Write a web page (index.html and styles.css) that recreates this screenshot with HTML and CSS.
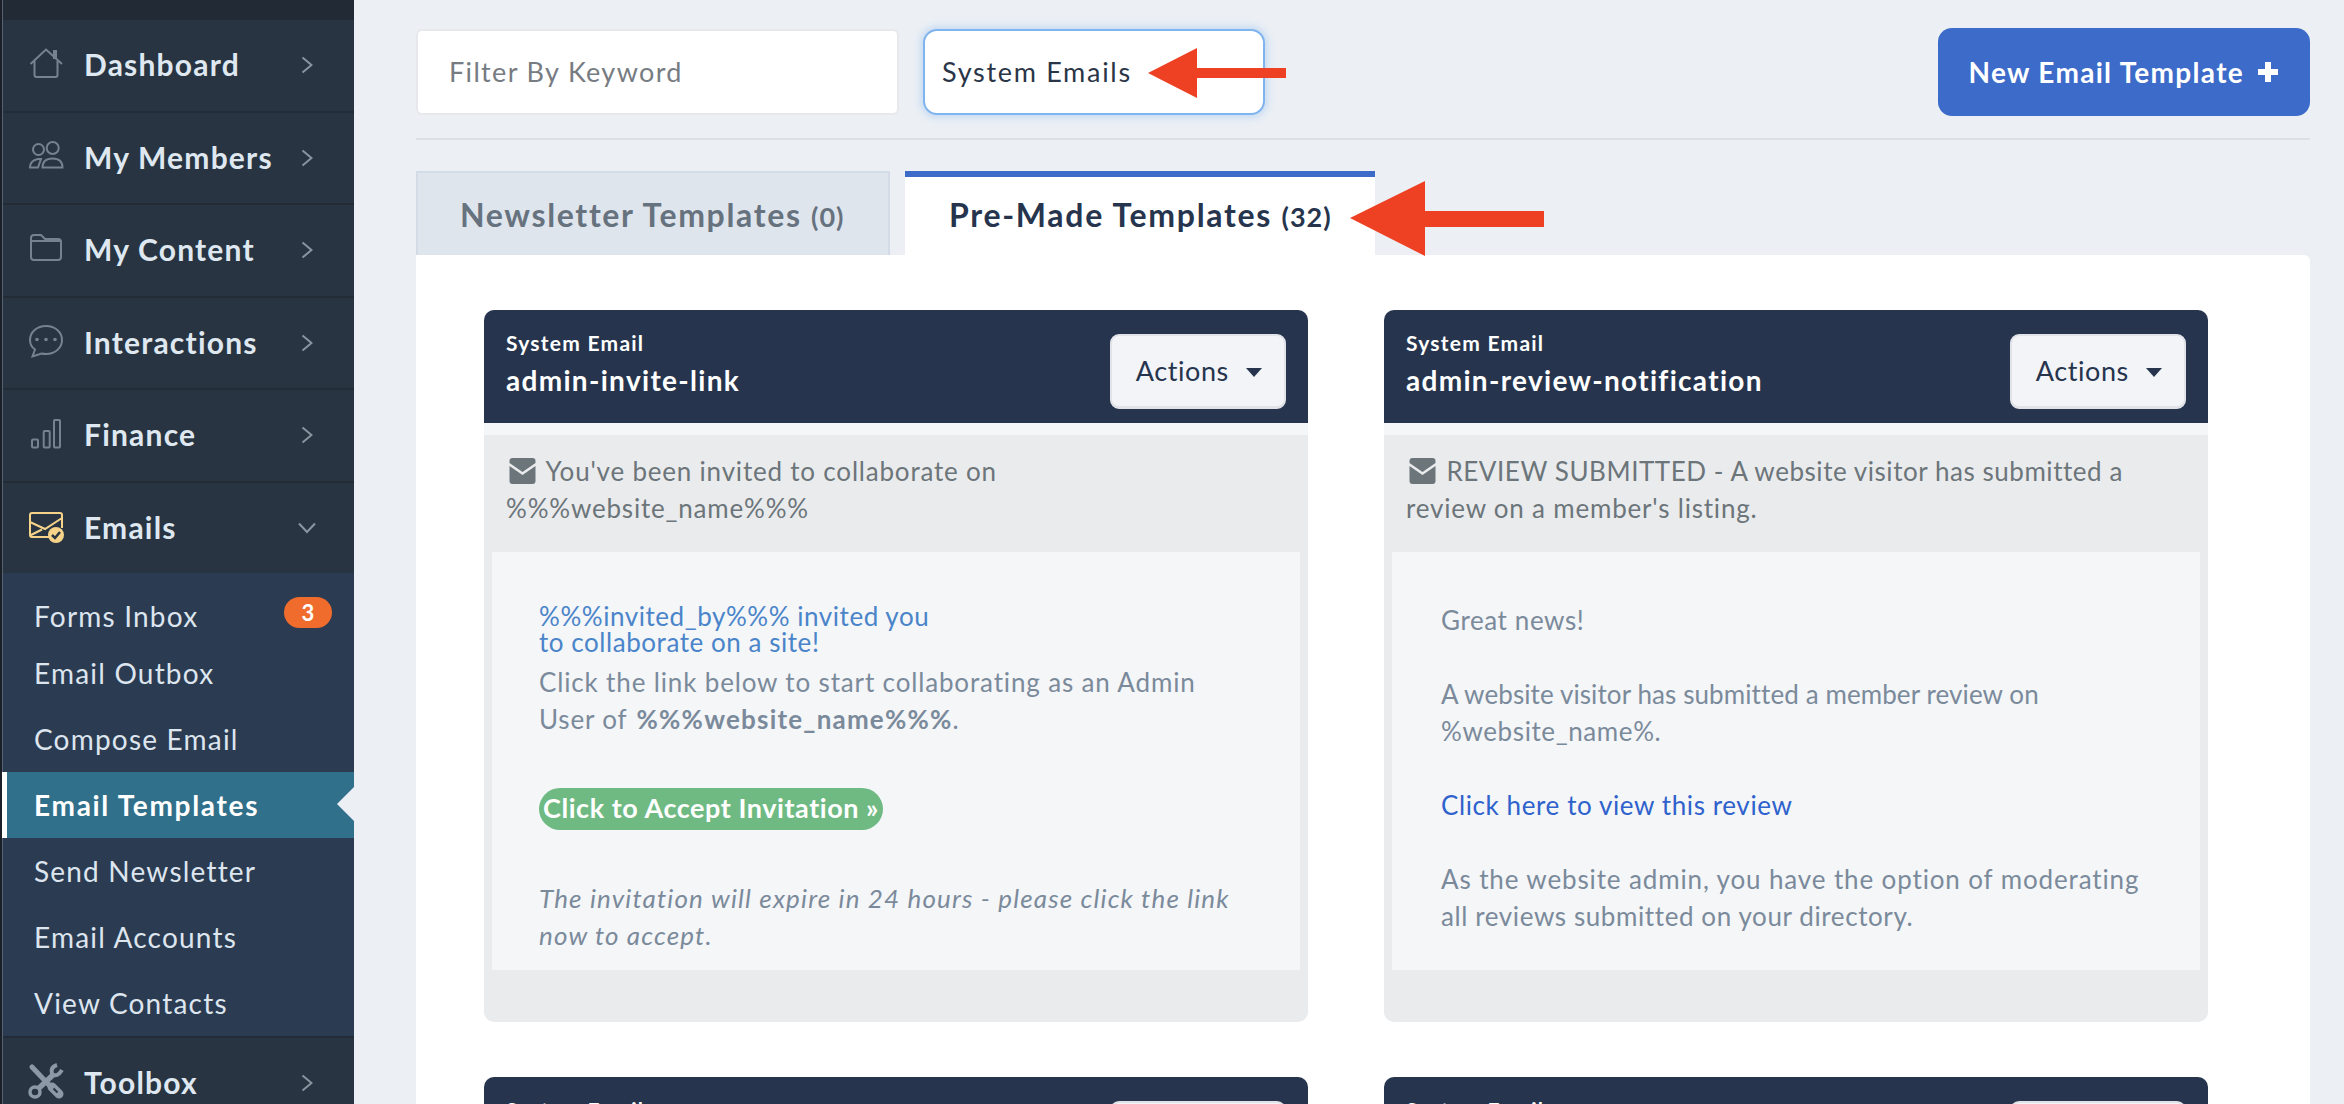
FILE: index.html
```html
<!DOCTYPE html>
<html lang="en">
<head>
    <meta charset="UTF-8">
    <meta name="viewport" content="width=device-width, initial-scale=1.0">
    <title>Email Templates</title>
    <link rel="stylesheet" href="styles.css">
</head>
<body>
    <aside class="sidebar">
        <div class="sidebar-top"></div>
        <a class="nav-item">
            <svg class="nav-icon" viewBox="0 0 34 30"><path d="M1.500 16 17 1.500 33 16M5.500 13v14q0 2 2 2h19q2 0 2-2V13"/><rect x="24" y="2" width="4" height="9" class="solid"/></svg>
            <span class="nav-label">Dashboard</span>
            <svg class="chevron" viewBox="0 0 12 18"><path d="m1.500 1.500 9 7.500-9 7.500"/></svg>
        </a>
        <a class="nav-item">
            <svg class="nav-icon" viewBox="0 0 34 30"><circle cx="9.500" cy="9.500" r="5.500"/><circle cx="23.700" cy="8" r="6"/><path d="M1 27.500q0-7 8-8.500h3l-3 8.500zM13.500 27.500q0-9 10-9t10 9z"/></svg>
            <span class="nav-label">My Members</span>
            <svg class="chevron" viewBox="0 0 12 18"><path d="m1.500 1.500 9 7.500-9 7.500"/></svg>
        </a>
        <a class="nav-item">
            <svg class="nav-icon" viewBox="0 0 34 30"><path d="M2 12V5q0-3 3-3h7l4 4h13q3 0 3 3v15q0 3-3 3H5q-3 0-3-3V9q0-1 2-1h28"/></svg>
            <span class="nav-label">My Content</span>
            <svg class="chevron" viewBox="0 0 12 18"><path d="m1.500 1.500 9 7.500-9 7.500"/></svg>
        </a>
        <a class="nav-item">
            <svg class="nav-icon" viewBox="0 0 34 30"><path d="M17 1C8 1 1 7 1 15c0 4 2 7.500 5 9.500l-2.500 7 9-3q2 .5 4.500 .5c9 0 16-6 16-14S26 1 17 1z"/><circle cx="8" cy="14.500" r="1.800" class="solid"/><circle cx="17" cy="14.500" r="1.800" class="solid"/><circle cx="26" cy="14.500" r="1.800" class="solid"/></svg>
            <span class="nav-label">Interactions</span>
            <svg class="chevron" viewBox="0 0 12 18"><path d="m1.500 1.500 9 7.500-9 7.500"/></svg>
        </a>
        <a class="nav-item">
            <svg class="nav-icon" viewBox="0 0 34 30"><rect x="3" y="21.500" width="6" height="8" rx="1"/><rect x="14.700" y="13" width="6" height="16.500" rx="1"/><rect x="25" y="2" width="6" height="27.500" rx="1"/></svg>
            <span class="nav-label">Finance</span>
            <svg class="chevron" viewBox="0 0 12 18"><path d="m1.500 1.500 9 7.500-9 7.500"/></svg>
        </a>
        <a class="nav-item open">
            <svg class="nav-icon mail" viewBox="0 0 34 30"><path d="M20 27H3q-2 0-2-2V5q0-2 2-2h28q2 0 2 2v13M1 12l15 7 17-11M1 25.500l12-6"/><circle cx="27" cy="25" r="8" class="badge-dot"/><path d="m23 25 3 3 5-6" class="badge-tick"/></svg>
            <span class="nav-label">Emails</span>
            <svg class="chevron down" viewBox="0 0 18 12"><path d="m1 1.500 8 8.500 8-8.500"/></svg>
        </a>
        <div class="submenu">
            <a class="sub-item first">Forms Inbox <span class="count">3</span></a>
            <a class="sub-item">Email Outbox</a>
            <a class="sub-item">Compose Email</a>
            <a class="sub-item active">Email Templates</a>
            <a class="sub-item">Send Newsletter</a>
            <a class="sub-item">Email Accounts</a>
            <a class="sub-item">View Contacts</a>
        </div>
        <a class="nav-item last">
            <svg class="nav-icon tools" viewBox="0 0 34 32"><path d="M3 2 22 22" class="shaft"/><path d="M23 22l7 7" class="handle"/><path d="M24.500 23.500l4 4" class="slot"/><path d="M25 9 9 24" class="wrench"/><path d="M28 0Q21 2 23 9 28 13 33 5" class="jaw"/><circle cx="6" cy="27" r="5" class="ring"/></svg>
            <span class="nav-label">Toolbox</span>
            <svg class="chevron" viewBox="0 0 12 18"><path d="m1.500 1.500 9 7.500-9 7.500"/></svg>
        </a>
    </aside>

    <main class="main">
        <div class="toolbar">
            <div class="field filter">Filter By Keyword</div>
            <div class="field select">System Emails</div>
            <a class="new-btn">New Email Template <svg class="plus" viewBox="0 0 24 24"><path d="M9 2h6v7h7v6h-7v7H9v-7H2V9h7z"/></svg></a>
        </div>

        <div class="tabs">
            <div class="tab">Newsletter Templates <small>(0)</small></div>
            <div class="tab current">Pre-Made Templates <small>(32)</small></div>
        </div>

        <section class="panel">
            <article class="card">
                <header class="card-head">
                    <div>
                        <div class="card-kind">System Email</div>
                        <div class="card-name">admin-invite-link</div>
                    </div>
                    <button class="actions">Actions <i class="caret"></i></button>
                </header>
                <div class="card-body">
                    <p class="summary"><svg class="env" viewBox="0 0 26 26"><path d="M3 0h20q3 0 3 3v2L13 14 0 5V3q0-3 3-3zM0 8l13 9 13-9v15q0 3-3 3H3q-3 0-3-3z"/></svg> You've been invited to collaborate on<br>%%%website_name%%%</p>
                    <div class="preview invite">
                        <h4 class="invite-title">%%%invited_by%%% invited you<br>to collaborate on a site!</h4>
                        <p class="invite-text">Click the link below to start collaborating as an Admin<br>User of <b>%%%website_name%%%</b>.</p>
                        <a class="accept">Click to Accept Invitation »</a>
                        <p class="invite-note">The invitation will expire in 24 hours - please click the link<br>now to accept.</p>
                    </div>
                </div>
            </article>

            <article class="card">
                <header class="card-head">
                    <div>
                        <div class="card-kind">System Email</div>
                        <div class="card-name">admin-review-notification</div>
                    </div>
                    <button class="actions">Actions <i class="caret"></i></button>
                </header>
                <div class="card-body">
                    <p class="summary"><svg class="env" viewBox="0 0 26 26"><path d="M3 0h20q3 0 3 3v2L13 14 0 5V3q0-3 3-3zM0 8l13 9 13-9v15q0 3-3 3H3q-3 0-3-3z"/></svg> <span class="tight">REVIEW SUBMITTED - A website visitor has submitted a</span><br>review on a member's listing.</p>
                    <div class="preview review">
                        Great news!<br><br>
                        <span class="tight">A website visitor has submitted a member review on</span><br>
                        %website_name%.<br><br>
                        <a class="review-link">Click here to view this review</a><br><br>
                        <span class="loose">As the website admin, you have the option of moderating</span><br>
                        all reviews submitted on your directory.
                    </div>
                </div>
            </article>

            <article class="card">
                <header class="card-head">
                    <div>
                        <div class="card-kind">System Email</div>
                    </div>
                    <button class="actions">Actions <i class="caret"></i></button>
                </header>
            </article>

            <article class="card">
                <header class="card-head">
                    <div>
                        <div class="card-kind">System Email</div>
                    </div>
                    <button class="actions">Actions <i class="caret"></i></button>
                </header>
            </article>
        </section>

        <svg class="callout callout-select" viewBox="0 0 138 50"><path d="M0 25 49 0v20h89v10H49v20z"/></svg>
        <svg class="callout callout-tab" viewBox="0 0 194 75"><path d="M0 37 75 0v30h119v16H75v29z"/></svg>
    </main>
</body>
</html>
```

FILE: styles.css
```css
html, body {
    margin: 0;
    padding: 0;
    height: 1104px;
    overflow: hidden;
}

body {
    display: flex;
    background-color: #ecf0f5;
    font-family: "Lato", "Open Sans", sans-serif;
    color: #26354d;
}

/* sidebar */
.sidebar {
    width: 351px;
    flex-shrink: 0;
    height: 1104px;
    border-left: 2px solid #1a1f28;
    padding-left: 1px;
    background-color: #566172;
    overflow: hidden;
}

.sidebar-top {
    height: 20px;
    background-color: #222a36;
}

.nav-item {
    display: flex;
    align-items: center;
    height: 90.5px;
    border-bottom: 2px solid #222b36;
    padding-left: 26px;
    padding-right: 41px;
    background-color: #283442;
}

.nav-item.open,
.nav-item.last {
    border-bottom: 0;
}

.nav-icon {
    width: 34px;
    height: 30px;
    margin-top: -5px;
    margin-right: 21px;
    flex-shrink: 0;
    overflow: visible;
    fill: none;
    stroke: #76828f;
    stroke-width: 2;
}

.nav-icon .solid {
    fill: #76828f;
    stroke: none;
}

.nav-icon.mail {
    stroke: #f5d48a;
}

.nav-icon .badge-dot {
    fill: #f5d48a;
    stroke: none;
}

.nav-icon .badge-tick {
    stroke: #283442;
    stroke-width: 2.500;
}

.nav-icon.tools {
    height: 32px;
    stroke: #8b98a5;
}

.tools .shaft {
    stroke-width: 5;
    stroke-linecap: round;
}

.tools .handle {
    stroke-width: 9;
    stroke-linecap: round;
}

.tools .slot {
    stroke: #283442;
    stroke-width: 2;
}

.tools .wrench {
    stroke-width: 5.500;
}

.tools .jaw {
    stroke-width: 4;
}

.tools .ring {
    fill: #283442;
    stroke-width: 3.500;
}

.nav-label {
    flex-grow: 1;
    margin-top: -2px;
    font-size: 30px;
    font-weight: 700;
    letter-spacing: 1.200px;
    color: #dfe8f0;
}

.chevron {
    width: 12px;
    height: 18px;
    fill: none;
    stroke: #8a95a1;
    stroke-width: 2;
}

.chevron.down {
    width: 18px;
    height: 12px;
    margin-right: -3px;
}

.submenu {
    padding-top: 19px;
    background-color: #2b3b52;
    border-bottom: 2px solid #222b36;
}

.sub-item {
    display: flex;
    align-items: center;
    justify-content: space-between;
    height: 66px;
    padding-left: 31px;
    padding-right: 22px;
    font-size: 28px;
    letter-spacing: 1.200px;
    color: #dde5ee;
}

.sub-item.first {
    height: 48px;
}

.sub-item.active {
    position: relative;
    margin-left: -1px;
    padding-left: 27px;
    border-left: 5px solid #ffffff;
    background-color: #31708a;
    font-weight: 700;
    letter-spacing: 1.700px;
    color: #ffffff;
}

.sub-item.active::after {
    content: "";
    position: absolute;
    right: 0;
    top: 15px;
    border-top: 17px solid transparent;
    border-bottom: 17px solid transparent;
    border-right: 17px solid #ecf0f5;
}

.count {
    width: 48px;
    height: 31px;
    margin-top: -7px;
    border-radius: 16px;
    background-color: #ef6c2d;
    font-size: 22px;
    font-weight: 700;
    line-height: 31px;
    letter-spacing: 0;
    text-align: center;
    color: #ffffff;
}

/* main column */
.main {
    position: relative;
    flex-grow: 1;
    padding: 28px 34px 0 62px;
}

.toolbar {
    display: flex;
    align-items: center;
    height: 88px;
    padding-bottom: 22px;
    border-bottom: 2px solid #dcdfe3;
}

.field {
    height: 86px;
    box-sizing: border-box;
    background-color: #ffffff;
    font-size: 27px;
}

.filter {
    width: 483px;
    padding-left: 31px;
    border: 2px solid #e6e8ec;
    border-radius: 6px;
    line-height: 82px;
    letter-spacing: 1.350px;
    color: #777c82;
}

.select {
    width: 342px;
    margin-left: 24px;
    padding-left: 17px;
    border: 2px solid #80b4ee;
    border-radius: 14px;
    box-shadow: 0 0 7px 3px rgba(128, 180, 238, .35);
    line-height: 82px;
    letter-spacing: 1.700px;
    color: #2a3547;
}

.new-btn {
    display: flex;
    align-items: center;
    margin-left: auto;
    height: 88px;
    box-sizing: border-box;
    padding-left: 31px;
    padding-right: 30px;
    border-radius: 14px;
    background-color: #3c6bc9;
    font-size: 28px;
    font-weight: 700;
    letter-spacing: 1.300px;
    color: #ffffff;
}

.plus {
    width: 24px;
    height: 24px;
    margin-left: 12px;
    fill: #ffffff;
}

.tabs {
    display: flex;
    gap: 15px;
    margin-top: 31px;
}

.tab {
    width: 474px;
    height: 84px;
    box-sizing: border-box;
    padding-left: 42px;
    background-color: #dfe5ec;
    border: 2px solid #d2dbe6;
    border-bottom: 0;
    font-size: 32px;
    font-weight: 700;
    line-height: 84px;
    letter-spacing: 1.650px;
    color: #67727f;
}

.tab small {
    font-size: 27px;
    letter-spacing: 1px;
}

.tab.current {
    width: 470px;
    padding-left: 44px;
    background-color: #ffffff;
    border: 0;
    border-top: 6px solid #3c6bc9;
    line-height: 75px;
    letter-spacing: 1.700px;
    color: #26354d;
}

.panel {
    display: grid;
    grid-template-columns: 824px 824px;
    column-gap: 76px;
    row-gap: 55px;
    padding: 55px 68px 0;
    height: 849px;
    overflow: hidden;
    box-sizing: border-box;
    background-color: #ffffff;
    border-top-right-radius: 6px;
}

.card {
    border-radius: 10px;
    background-color: #eaebed;
}

.card-head {
    display: flex;
    align-items: flex-start;
    justify-content: space-between;
    height: 113px;
    box-sizing: border-box;
    padding: 20px 22px 0;
    border-radius: 10px 10px 0 0;
    background-color: #26354d;
    color: #ffffff;
}

.card-kind {
    font-size: 21px;
    font-weight: 700;
    letter-spacing: 1.250px;
}

.card-name {
    margin-top: 8px;
    font-size: 28px;
    font-weight: 700;
    letter-spacing: 1.300px;
}

.actions {
    width: 176px;
    height: 75px;
    margin-top: 4px;
    padding: 0 0 2px 2px;
    border: 2px solid #e1e3e8;
    border-bottom-width: 3px;
    border-radius: 9px;
    background-color: #f3f4f8;
    font-family: inherit;
    font-size: 27px;
    letter-spacing: .6px;
    color: #26354d;
}

.caret {
    display: inline-block;
    margin-left: 10px;
    vertical-align: 4px;
    border-top: 9px solid #26354d;
    border-left: 8px solid transparent;
    border-right: 8px solid transparent;
}

.card-body {
    border-top: 12px solid #f4f6f8;
    padding-bottom: 52px;
}

.summary {
    margin: 0;
    padding: 18px 22px 25px;
    font-size: 26px;
    line-height: 37px;
    letter-spacing: .8px;
    color: #6c757a;
}

.summary .tight {
    letter-spacing: .55px;
}

.env {
    width: 27px;
    height: 26px;
    margin-left: 3px;
    margin-right: 3px;
    vertical-align: -3px;
    fill: #6c757a;
}

.preview {
    margin: 0 8px;
    height: 418px;
    box-sizing: border-box;
    background-color: #f4f6f8;
    color: #7b8a9b;
    font-size: 26px;
}

.invite {
    padding: 51px 0 0 47px;
}

.invite-title {
    margin: 0;
    font-size: 26px;
    font-weight: 400;
    line-height: 26px;
    letter-spacing: .55px;
    color: #4a84c9;
}

.invite-text {
    margin: 9px 0 0;
    line-height: 37px;
    letter-spacing: .85px;
}

.invite-text b {
    letter-spacing: 1.200px;
    margin-left: 2px;
}

.accept {
    display: block;
    width: 344px;
    height: 42px;
    box-sizing: border-box;
    margin-top: 50px;
    border-radius: 21px;
    background-color: #6fba83;
    font-size: 27px;
    font-weight: 700;
    line-height: 40px;
    letter-spacing: .55px;
    text-align: center;
    color: #ffffff;
}

.invite-note {
    margin: 50px 0 0;
    font-style: italic;
    line-height: 37px;
    letter-spacing: 1.150px;
}

.review {
    padding: 50px 0 0 49px;
    line-height: 37px;
    letter-spacing: .6px;
}

.review .tight {
    letter-spacing: .1px;
}

.review .loose {
    letter-spacing: .87px;
}

.review-link {
    color: #2f62cc;
}

/* red arrows drawn over the screenshot */
.callout {
    position: absolute;
    fill: #ee4023;
}

.callout-select {
    left: 794px;
    top: 48px;
    width: 138px;
    height: 50px;
}

.callout-tab {
    left: 996px;
    top: 181px;
    width: 194px;
    height: 75px;
}
```
